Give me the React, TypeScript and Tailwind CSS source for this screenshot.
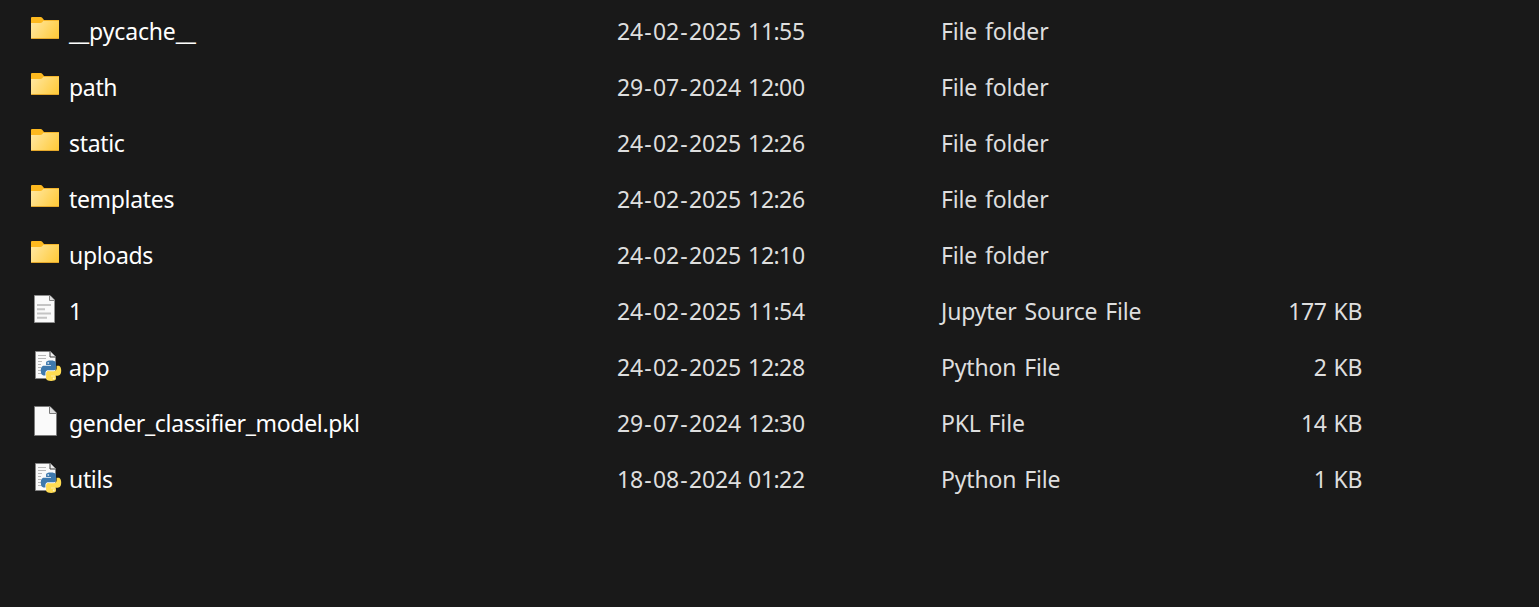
type IconKind = "folder" | "text" | "python" | "blank";

interface FileRow {
  icon: IconKind;
  name: string;
  date: string;
  time: string;
  type: string;
  size?: string;
}

const rows: FileRow[] = [
  { icon: "folder", name: "__pycache__", date: "24-02-2025", time: "11:55", type: "File folder" },
  { icon: "folder", name: "path", date: "29-07-2024", time: "12:00", type: "File folder" },
  { icon: "folder", name: "static", date: "24-02-2025", time: "12:26", type: "File folder" },
  { icon: "folder", name: "templates", date: "24-02-2025", time: "12:26", type: "File folder" },
  { icon: "folder", name: "uploads", date: "24-02-2025", time: "12:10", type: "File folder" },
  { icon: "text", name: "1", date: "24-02-2025", time: "11:54", type: "Jupyter Source File", size: "177 KB" },
  { icon: "python", name: "app", date: "24-02-2025", time: "12:28", type: "Python File", size: "2 KB" },
  { icon: "blank", name: "gender_classifier_model.pkl", date: "29-07-2024", time: "12:30", type: "PKL File", size: "14 KB" },
  { icon: "python", name: "utils", date: "18-08-2024", time: "01:22", type: "Python File", size: "1 KB" },
];

function FolderIcon() {
  return (
    <>
      <path d="M1 5a1 1 0 0 1 1-1h8.600c.7 0 1.200.3 1.600.8L14 7v5H1Z" fill="#fdb91f" />
      <path d="M1 10h9.500c.7 0 1.200-.2 1.700-.7L14 7h14a1 1 0 0 1 1 1v17a1 1 0 0 1-1 1H2a1 1 0 0 1-1-1Z" fill="url(#folder-body)" />
      <path d="M13.300 7.500H29" stroke="#f5b62c" />
      <path d="M1.300 25.500h27.400" stroke="#e5a82b" />
    </>
  );
}

function TextIcon() {
  return (
    <>
      <path d="M4.500 2.500H20L24.500 7v22.500h-20Z" fill="#fafafa" stroke="#8f8f8f" />
      <path d="M19.500 2.500v5h5" fill="#dedede" stroke="#858585" />
      <path d="M7 12h14M7 16.200h8M7 20.500h14M7 24.800h10" stroke="#c4c4c4" strokeWidth="2" />
    </>
  );
}

function PythonIcon() {
  return (
    <>
      <path d="M5.500 2.500h15l5 5v22h-20Z" fill="#fafafa" stroke="#858585" />
      <path d="M20 2.500v5.500h5.500" fill="#ececec" stroke="#3b3b3b" />
      <path d="M8 6.500h8M8 9.500h8M8 12.500h4M8 15.500h3M8 18.500h3M8 21.500h3M8 24.500h4" stroke="#b8b8b8" />
      <g transform="translate(10.800 11.500) scale(.85)">
        <path
          d="M11.900 0C5.800 0 6.200 2.600 6.200 2.600v2.800h5.800v.8H3.900S0 5.800 0 11.900s3.400 5.800 3.400 5.800h2v-2.800s-.1-3.400 3.400-3.400h5.800s3.200.1 3.200-3.100V3.200S18.300 0 11.900 0Z"
          fill="#3e79ad"
        />
        <path
          d="M12.100 24c6.100 0 5.700-2.600 5.700-2.600v-2.800H12v-.8h8.100s3.900.4 3.900-5.700-3.400-5.800-3.400-5.800h-2v2.800s.1 3.400-3.400 3.400H9.400s-3.200-.1-3.200 3.100v5.200S5.700 24 12.100 24Z"
          fill="#ffdc52"
        />
        <circle cx="8.800" cy="2.900" r="1.100" fill="#c5d8e9" />
        <circle cx="15.200" cy="21.100" r="1.100" fill="#fff5c8" />
      </g>
    </>
  );
}

function BlankIcon() {
  return (
    <>
      <path d="M4.500 1.500H20L26.500 8v22.500h-22Z" fill="#fafafa" stroke="#7b7b7b" />
      <path d="M19.500 1.500v7h7" fill="#dedede" stroke="#7b7b7b" />
    </>
  );
}

const icons = { folder: FolderIcon, text: TextIcon, python: PythonIcon, blank: BlankIcon };

function FileIcon({ kind }: { kind: IconKind }) {
  const Drawing = icons[kind];
  return (
    <svg className="mt-[10px] h-[34px] w-[34px] shrink-0" viewBox="0 0 34 34" fill="none" aria-hidden="true">
      <defs>
        <linearGradient id="folder-body" x1="2" y1="9" x2="28" y2="26" gradientUnits="userSpaceOnUse">
          <stop stopColor="#ffe79f" />
          <stop offset="1" stopColor="#ffc937" />
        </linearGradient>
      </defs>
      <Drawing />
    </svg>
  );
}

function Modified({ date, time }: { date: string; time: string }) {
  const [day, month, year] = date.split("-");
  const [hour, minute] = time.split(":");
  return (
    <span className="tracking-[-0.15px] whitespace-pre">
      {day}
      <span className="px-[1.35px]">-</span>
      {month}
      <span className="px-[1.35px]">-</span>
      {year}
      <span className="tracking-[1px]"> </span>
      {hour}
      <span className="-mx-[0.5px]">:</span>
      {minute}
    </span>
  );
}

export default function App() {
  return (
    <main className="h-[607px] w-full overflow-hidden bg-[#191919] pt-[3px] font-['Noto_Sans',sans-serif] text-[23px] leading-[56px] text-[#dedede]">
      {rows.map((row) => (
        <div key={row.name} className="flex h-14 whitespace-nowrap">
          <div className="flex w-[617px] gap-[5px] pl-[30px] text-white">
            <FileIcon kind={row.icon} />
            <span className={row.name.startsWith("__") ? "tracking-[-0.15px]" : "tracking-[-0.33px]"}>{row.name}</span>
          </div>
          <div className="w-[324px]">
            <Modified date={row.date} time={row.time} />
          </div>
          <div className="w-[221px] tracking-[-0.15px] [word-spacing:2px]">{row.type}</div>
          <div className="w-[200px] text-right tracking-[-0.4px] [word-spacing:1.5px]">{row.size}</div>
        </div>
      ))}
    </main>
  );
}
